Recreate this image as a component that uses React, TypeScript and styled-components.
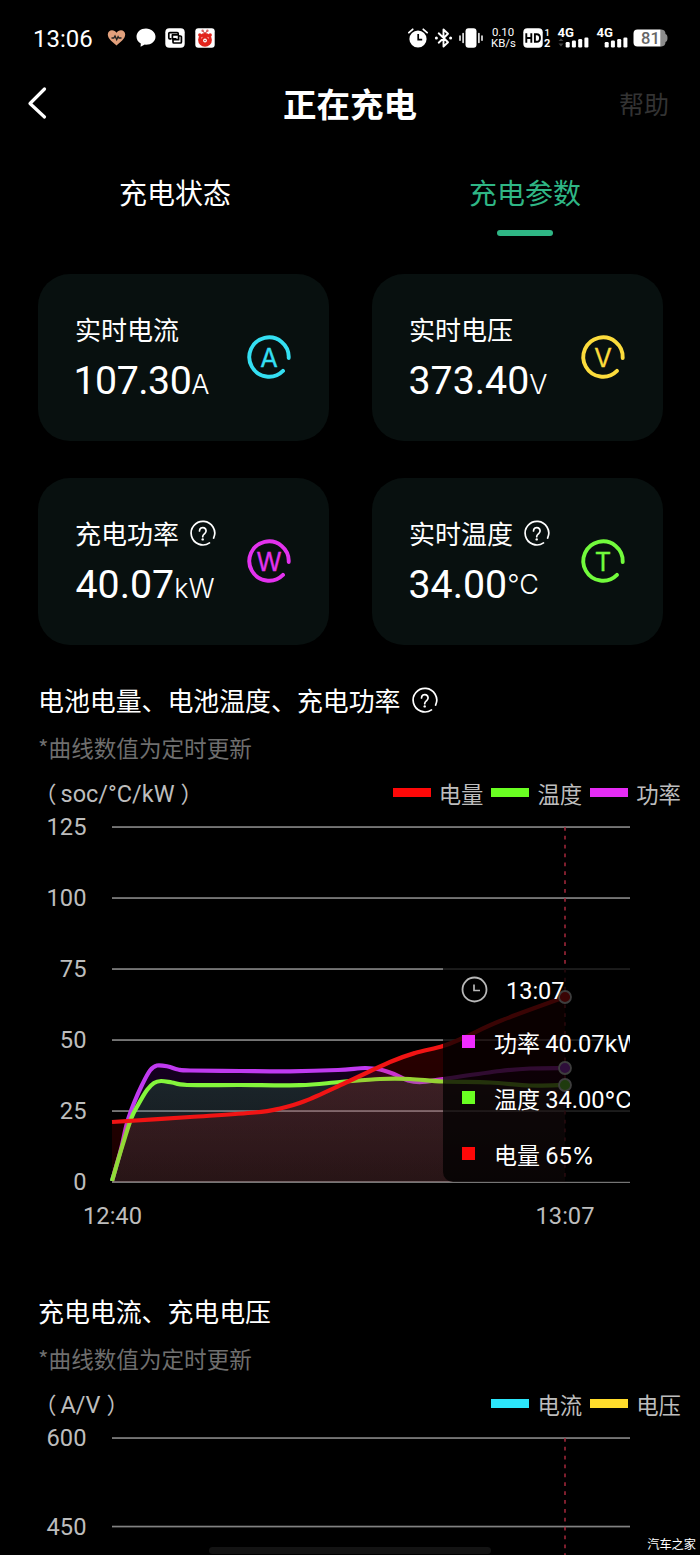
import React from "react";
import styled, { createGlobalStyle } from "styled-components";

const font = `"Noto Sans CJK SC", "Noto Sans", sans-serif`;
const numeric = `Roboto, "Noto Sans CJK SC", sans-serif`;
const latin = `Inter, "Noto Sans CJK SC", sans-serif`;

const GlobalStyle = createGlobalStyle`
  *, *::before, *::after { box-sizing: border-box; }
  html, body { margin: 0; padding: 0; background: #000; }
  body { font-family: ${font}; color: #fff; }
  svg { display: block; flex: none; overflow: visible; }
  svg text { font-family: ${numeric}; }
`;

const Screen = styled.div`
  position: relative;
  width: 700px;
  height: 1555px;
  overflow: hidden;
  background: #000;
  display: flex;
  flex-direction: column;
`;

const Num = styled.span`
  font-family: ${numeric};
  line-height: 1;
`;

const Latin = styled.span`
  font-family: ${latin};
  line-height: 1;
`;

/* ---------- status bar ---------- */

const StatusBar = styled.header`
  height: 75px;
  padding: 0 31px 0 33px;
  display: flex;
  align-items: center;
  justify-content: space-between;
`;

const StatusGroup = styled.div<{ $gap: number }>`
  display: flex;
  align-items: center;
  gap: ${(p) => p.$gap}px;
`;

const Clock = styled.span`
  width: 64.5px;
  padding-top: 2px;
  font-family: ${numeric};
  font-size: 24px;
  line-height: 30px;
`;

const NetSpeed = styled.div`
  width: 24px;
  margin: 0 2px;
  font-family: ${numeric};
  font-size: 11.400px;
  line-height: 11px;
  text-align: center;
  white-space: nowrap;
`;

const NetLine = styled.div`
  height: 11px;
`;

const HeartIcon = () => (
  <svg width="19" height="18" viewBox="0 0 19 18">
    <path d="M9.5 16.5C6 13.6 .8 10 .8 5.6.8 3 2.7 1.2 5 1.2c1.900 0 3.600 1 4.500 2.600C10.400 2.200 12.100 1.200 14 1.200c2.300 0 4.200 1.800 4.200 4.400 0 4.400-5.200 8-8.700 10.900z" fill="#e2a07c" />
    <path d="M4.500 9h2.300l1.200-2 1.700 3.600 1.400-3 .9 1.400h2.500" fill="none" stroke="#222" strokeWidth="1.300" />
  </svg>
);

const BubbleIcon = () => (
  <svg width="20" height="20" viewBox="0 0 20 20">
    <path d="M10 .5C4.700 .5 .5 4 .5 8.700c0 2.900 1.700 5.300 4.300 6.700L4.600 18.700l4.200-2.100 1.200.1c5.300 0 9.500-3.500 9.500-8S15.300 .5 10 .5z" fill="#fff" />
  </svg>
);

const CardsIcon = () => (
  <svg width="20" height="20" viewBox="0 0 20 20">
    <rect x=".3" y=".3" width="19.400" height="19.400" rx="4" fill="#fff" />
    <g fill="none" stroke="#000" strokeWidth="1.700" strokeLinejoin="round">
      <path d="M6.300 10.800H4.800a1 1 0 0 1-1-1V5.600a1 1 0 0 1 1-1h7.400a1 1 0 0 1 1 1v1.200H7.400v4h4" />
      <path d="M13.800 8h1.600a1 1 0 0 1 1 1v5a1 1 0 0 1-1 1H9a1 1 0 0 1-1-1v-2.300h5.600V7" />
    </g>
  </svg>
);

const BearIcon = () => (
  <svg width="20" height="20" viewBox="0 0 20 20">
    <rect x=".3" y=".3" width="19.400" height="19.400" rx="3" fill="#fff" />
    <path d="M10 5.500 7.800 3M10 5.500l2.200-2.500" stroke="#c33" strokeWidth="1.100" />
    <circle cx="7.600" cy="2.700" r="1.200" fill="#d66" />
    <circle cx="12.400" cy="2.700" r="1.200" fill="#d66" />
    <circle cx="10" cy="11.900" r="6.900" fill="#e2241c" />
    <circle cx="4.800" cy="7" r="1.700" fill="#e2241c" />
    <circle cx="15.200" cy="7" r="1.700" fill="#e2241c" />
    <circle cx="10" cy="12.500" r="1.900" fill="#fff" />
    <circle cx="10" cy="12.500" r=".7" fill="#922" />
    <path d="M6 10.200l1.500-.8M14 10.200l-1.500-.8" stroke="#fbb" strokeWidth="1" />
  </svg>
);

const AlarmIcon = () => (
  <svg width="20" height="20" viewBox="0 0 20 20">
    <circle cx="10" cy="11" r="8.600" fill="#fff" />
    <path d="M.9 4.700 4.700 1.300M19.100 4.700l-3.800-3.400" stroke="#fff" strokeWidth="1.800" strokeLinecap="round" />
    <path d="M10.200 6v5.700h4" fill="none" stroke="#000" strokeWidth="1.700" />
  </svg>
);

const BluetoothIcon = () => (
  <svg width="19" height="20" viewBox="-.5 0 19 20">
    <path d="M4.200 5.300 13.500 14.300 9 18.500V1.500l4.500 4.200L4.200 14.700" fill="none" stroke="#fff" strokeWidth="1.900" strokeLinejoin="round" strokeLinecap="round" />
    <circle cx="1.900" cy="10" r="1.500" fill="#fff" />
    <circle cx="16.100" cy="10" r="1.500" fill="#fff" />
  </svg>
);

const VibrateIcon = () => (
  <svg width="24" height="20" viewBox="0 0 24 20">
    <rect x="6.500" y=".3" width="11" height="19.400" rx="3" fill="#fff" />
    <path d="M4.100 5.500v9M1 8v4.300M19.900 5.500v9M23 8v4.300" stroke="#fff" strokeWidth="1.500" strokeLinecap="round" />
  </svg>
);

const HdIcon = () => (
  <svg width="29" height="20" viewBox="0 0 29 20">
    <rect x=".3" y=".3" width="19.400" height="19.400" rx="4" fill="#fff" />
    <path d="M3.300 5.300v9.400M8.300 5.300v9.400M3.300 10h5" stroke="#000" strokeWidth="1.900" fill="none" />
    <path d="M11.900 6.200h1.800q3.300 0 3.300 3.800t-3.300 3.800h-1.800z" stroke="#000" strokeWidth="1.900" fill="none" />
    <text x="21.500" y="8" fontSize="9.500" fontWeight="500" fill="#fff">1</text>
    <text x="21" y="19" fontSize="11" fontWeight="700" fill="#fff">2</text>
  </svg>
);

const SignalIcon = ({ arrows, width }: { arrows?: boolean; width: number }) => (
  <svg width={width} height="22" viewBox={`0 0 ${width} 22`}>
    <text x="-.5" y="9.800" fontSize="12.500" fontWeight="700" fill="#fff" textLength="16.500" lengthAdjust="spacingAndGlyphs">4G</text>
    {arrows && <path d="M.5 14 3 11.500 5.500 14zM.5 16.500h5L3 19.500z" fill="#444" />}
    {[[8.200, 5.500], [14.400, 7], [20.700, 8.500], [26.900, 10]].map(([x, h]) => (
      <rect key={x} x={x - 0.5} y={20.500 - h} width="4" height={h} rx="1.200" fill="#fff" />
    ))}
  </svg>
);

const BatteryIcon = () => (
  <svg width="36" height="18" viewBox="0 0 36 18">
    <path d="M27 .5h1.500a4.500 4.500 0 0 1 4 4.500q2 .5 2 4t-2 4a4.500 4.500 0 0 1-4 4.500H27z" fill="#8c8c8c" />
    <path d="M4.500 .5H27.300v17H4.500a4 4 0 0 1-4-4v-9a4 4 0 0 1 4-4z" fill="#fff" />
    <text x="8" y="15" fontSize="16.500" fontWeight="500" fill="#666">81</text>
  </svg>
);

/* ---------- navigation ---------- */

const NavBar = styled.nav`
  height: 56px;
  padding: 0 31px;
  display: grid;
  grid-template-columns: 1fr auto 1fr;
  align-items: center;
`;

const BackIcon = styled.svg`
  margin-left: -6px;
`;

const NavTitle = styled.h1`
  margin: 0;
  font-size: 33.500px;
  line-height: 40px;
  font-weight: 700;
`;

const HelpLink = styled.span`
  justify-self: end;
  font-size: 25px;
  line-height: 32px;
  color: #333;
`;

const TabBar = styled.div`
  margin-top: 44px;
  height: 61px;
  display: grid;
  grid-template-columns: 1fr 1fr;
`;

const Tab = styled.div<{ $active?: boolean }>`
  display: flex;
  flex-direction: column;
  align-items: center;
  font-size: 28px;
  line-height: 34px;
  color: ${(p) => (p.$active ? "#2fb685" : "#fff")};
  &::after {
    content: "";
    width: 56px;
    height: 6px;
    margin: 21px 1px 0 0;
    border-radius: 3px;
    background: ${(p) => (p.$active ? "#2fb685" : "transparent")};
  }
`;

/* ---------- metric cards ---------- */

const CardGrid = styled.section`
  margin: 38px 37.5px 0;
  display: grid;
  grid-template-columns: 291px 291px;
  grid-auto-rows: 167px;
  gap: 37px 43px;
`;

const Card = styled.article`
  border-radius: 32px;
  background: #08100f;
  padding: 0 38px 0 37.5px;
  display: flex;
  align-items: center;
  justify-content: space-between;
`;

const CardText = styled.div`
  display: flex;
  flex-direction: column;
  gap: 8px;
  white-space: nowrap;
`;

const CardLabel = styled.div`
  display: flex;
  align-items: center;
  gap: 10px;
  font-size: 26px;
  line-height: 34px;
`;

const CardValue = styled.div<{ $shift: number; $tight?: boolean }>`
  margin-left: ${(p) => p.$shift}px;
  height: 50px;
  font-family: ${numeric};
  font-size: 39.300px;
  line-height: 54px;
  letter-spacing: ${(p) => (p.$tight ? "-0.5px" : "normal")};
`;

const CardUnit = styled.span<{ $raise?: number }>`
  position: relative;
  top: ${(p) => -(p.$raise ?? 0)}px;
  font-family: ${latin};
  font-size: 27px;
  font-weight: 350;
  line-height: 1;
`;

const HelpIcon = () => (
  <svg width="28" height="28" viewBox="0 0 28 28">
    <g transform="translate(0 1)">
      <path d="M24.600 18.100A11.800 11.800 0 1 0 20.500 22.900" fill="none" stroke="#fff" strokeWidth="1.700" strokeLinecap="round" />
      <path d="M10.500 10.900a3.300 3.300 0 1 1 5.400 2.500c-1.300 1.100-2.200 1.500-2.200 3.300" fill="none" stroke="#fff" strokeWidth="1.700" strokeLinecap="round" />
      <circle cx="13.700" cy="19.400" r="1.200" fill="#fff" />
    </g>
  </svg>
);

const BadgeSvg = styled.svg`
  margin-top: -1px;
  text {
    font-family: ${latin};
  }
`;

const MetricBadge = ({ letter, color }: { letter: string; color: string }) => (
  <BadgeSvg width="44" height="44" viewBox="0 0 44 44">
    <path d="M41.700 23A19.700 19.700 0 1 0 36 35.900" fill="none" stroke={color} strokeWidth="3.900" strokeLinecap="round" />
    <text x="22" y="31.500" fontSize="25.500" fontWeight="400" fill={color} stroke={color} strokeWidth=".3" textAnchor="middle">{letter}</text>
  </BadgeSvg>
);

const metrics = [
  { label: "实时电流", value: "107.30", unit: "A", letter: "A", color: "#34dff2", shift: -1.5, tight: true },
  { label: "实时电压", value: "373.40", unit: "V", letter: "V", color: "#fcdc3c", shift: -0.5 },
  { label: "充电功率", value: "40.07", unit: "kW", letter: "W", color: "#e332ee", shift: 0.5, help: true },
  { label: "实时温度", value: "34.00", unit: "°C", letter: "T", color: "#72fb3c", shift: -0.5, raise: 4, help: true },
];

/* ---------- charts ---------- */

const ChartSection = styled.section<{ $top: number }>`
  margin-top: ${(p) => p.$top}px;
  display: flex;
  flex-direction: column;
`;

const ChartTitle = styled.h2`
  margin: 0 38px;
  height: 36px;
  display: flex;
  align-items: center;
  gap: 11px;
  font-size: 25.900px;
  line-height: 36px;
  font-weight: 400;
`;

const ChartNote = styled.p`
  margin: 15px 38px 0;
  font-size: 22.600px;
  line-height: 30px;
  color: #6e6e6e;
`;

const LegendRow = styled.div`
  margin: 15px 19px 0 38px;
  height: 30px;
  display: flex;
  align-items: center;
  justify-content: space-between;
  font-size: 22.500px;
  line-height: 30px;
  color: #bdbdbd;
`;

const AxisUnit = styled.span`
  display: flex;
  align-items: center;
  height: 30px;
  margin-left: -4px;
  white-space: nowrap;
`;

const AxisUnitText = styled(Num)`
  margin: 2px 6px 0 4px;
  font-size: 23.500px;
  line-height: 30px;
`;

const Legend = styled.div`
  display: flex;
  gap: 8px;
`;

const LegendItem = styled.span<{ $color: string }>`
  display: flex;
  align-items: center;
  gap: 8px;
  font-size: 22.400px;
  &::before {
    content: "";
    width: 38px;
    height: 9px;
    margin-top: -1px;
    background: ${(p) => p.$color};
  }
`;

const Plot = styled.div`
  position: relative;
  width: 700px;
  margin-top: 1px;
`;

const TooltipClip = styled.div`
  position: absolute;
  left: 443px;
  top: 159px;
  width: 187px;
  height: 214px;
  overflow: hidden;
`;

const Tooltip = styled.div`
  width: 215px;
  height: 214px;
  padding: 4px 0 0 18px;
  border-radius: 0 0 10px 10px;
  background: rgba(0, 0, 0, 0.76);
  display: flex;
  flex-direction: column;
  white-space: nowrap;
`;

const TooltipTime = styled.div`
  height: 34px;
  display: flex;
  align-items: center;
  gap: 18px;
  font-family: ${numeric};
  font-size: 23.500px;
  line-height: 34px;
`;

const TimeText = styled.span`
  padding-top: 4px;
`;

const TooltipRow = styled.div<{ $color: string }>`
  height: 56px;
  padding-top: 15px;
  display: flex;
  align-items: center;
  gap: 19px;
  font-size: 23px;
  line-height: 40px;
  &::before {
    content: "";
    width: 13px;
    height: 13px;
    margin: -1px 0 0 1px;
    background: ${(p) => p.$color};
  }
`;

const TooltipText = styled.span`
  height: 40px;
`;

const TooltipValue = styled(Num)`
  font-size: 23.700px;
`;

const HomeIndicator = styled.div`
  position: absolute;
  left: 209px;
  bottom: 1px;
  width: 282px;
  height: 7px;
  border-radius: 4px;
  background: #131313;
`;

const Watermark = styled.div`
  position: absolute;
  right: 4px;
  bottom: 2px;
  font-size: 12.200px;
  line-height: 18px;
`;

type Pt = [number, number];

/* Smooth curve through the samples (Catmull-Rom converted to cubic segments). */
const curve = (pts: Pt[]) => {
  let d = `M${pts[0][0]} ${pts[0][1]}`;
  for (let i = 0; i < pts.length - 1; i++) {
    const a = pts[Math.max(i - 1, 0)];
    const b = pts[i];
    const c = pts[i + 1];
    const e = pts[Math.min(i + 2, pts.length - 1)];
    d += `C${b[0] + (c[0] - a[0]) / 6} ${b[1] + (c[1] - a[1]) / 6} ${c[0] - (e[0] - b[0]) / 6} ${c[1] - (e[1] - b[1]) / 6} ${c[0]} ${c[1]}`;
  }
  return d;
};

const BASE = 373;

const power: Pt[] = [[112, 372], [121, 340], [127, 314], [134, 294], [142, 276], [150, 261.500], [157, 256.500], [168, 257.500], [178, 260.500], [190, 261.500], [240, 262], [290, 262.300], [338, 261], [365, 259], [380, 260.500], [394, 265], [408, 271.500], [422, 273], [443, 270], [500, 262], [530, 259.500], [565, 259]];
const temperature: Pt[] = [[112, 372], [122, 338], [131, 310], [138, 296], [147, 281], [154, 274], [161, 272], [172, 273.500], [187, 276], [240, 276], [300, 276.200], [340, 273], [380, 270], [410, 270], [443, 272.500], [490, 273.500], [530, 276.500], [565, 276]];
const soc: Pt[] = [[112, 313], [190, 308], [255, 303.500], [280, 299.500], [305, 292], [345, 274], [390, 253], [415, 244], [443, 237], [463, 229], [500, 212], [565, 188]];

const series = [
  { id: "power", pts: power, line: "#c03af0", fill: "#a000f0", top: 0.13, bottom: 0.06 },
  { id: "temperature", pts: temperature, line: "#84f53c", fill: "#3cb95f", top: 0.2, bottom: 0.12 },
  { id: "soc", pts: soc, line: "#f11414", fill: "#ff0000", top: 0.18, bottom: 0.1 },
];

const GridLine = ({ y, label }: { y: number; label: string }) => (
  <g>
    <rect x="112" y={y - 0.800} width="518" height="1.700" fill="#828282" />
    <text x="86.500" y={y + 8} fontSize="23.700" fill="#bdbdbd" textAnchor="end">{label}</text>
  </g>
);

const Cursor = ({ y1, y2 }: { y1: number; y2: number }) => (
  <path d={`M565 ${y1}V${y2}`} stroke="#a8283c" strokeWidth="1.500" strokeDasharray="3.700 5.170" />
);

const BatteryPlot = () => (
  <svg width="700" height="430" viewBox="0 0 700 430">
    <defs>
      {series.map((s) => (
        <linearGradient key={s.id} id={s.id} x1="0" y1="0" x2="0" y2="1">
          <stop offset="0" stopColor={s.fill} stopOpacity={s.top} />
          <stop offset="1" stopColor={s.fill} stopOpacity={s.bottom} />
        </linearGradient>
      ))}
    </defs>
    {["125", "100", "75", "50", "25", "0"].map((label, i) => (
      <GridLine key={label} y={18 + i * 71} label={label} />
    ))}
    <Cursor y1={18} y2={BASE} />
    {series.map((s) => (
      <g key={s.id}>
        <path d={`${curve(s.pts)}V${BASE}H112Z`} fill={`url(#${s.id})`} />
        <path d={curve(s.pts)} fill="none" stroke={s.line} strokeWidth="4.200" />
      </g>
    ))}
    {series.map((s) => (
      <circle key={s.id} cx="565" cy={s.pts[s.pts.length - 1][1]} r="6" fill={s.line} stroke="#fff" strokeWidth="1.800" />
    ))}
    <text x="112.500" y="415" fontSize="23.700" fill="#bdbdbd" textAnchor="middle">12:40</text>
    <text x="565" y="415" fontSize="23.700" fill="#bdbdbd" textAnchor="middle">13:07</text>
  </svg>
);

const ClockIcon = () => (
  <svg width="27" height="27" viewBox="0 0 27 27">
    <circle cx="13.500" cy="13.500" r="12" fill="none" stroke="#b8b8b8" strokeWidth="1.800" />
    <path d="M13 8.500v6h6" fill="none" stroke="#b8b8b8" strokeWidth="1.700" />
  </svg>
);

export default function App() {
  return (
    <Screen>
      <GlobalStyle />
      <StatusBar>
        <StatusGroup $gap={9.5}>
          <Clock>13:06</Clock>
          <HeartIcon />
          <BubbleIcon />
          <CardsIcon />
          <BearIcon />
        </StatusGroup>
        <StatusGroup $gap={6}>
          <AlarmIcon />
          <BluetoothIcon />
          <VibrateIcon />
          <NetSpeed>
            <NetLine>0.10</NetLine>
            <NetLine>KB/s</NetLine>
          </NetSpeed>
          <HdIcon />
          <SignalIcon arrows width={33} />
          <SignalIcon width={30} />
          <BatteryIcon />
        </StatusGroup>
      </StatusBar>

      <NavBar>
        <BackIcon width="24" height="32" viewBox="0 0 24 32">
          <path d="M19.500 2 5 16.500 19.500 30" fill="none" stroke="#fff" strokeWidth="3.200" strokeLinecap="round" strokeLinejoin="round" />
        </BackIcon>
        <NavTitle>正在充电</NavTitle>
        <HelpLink>帮助</HelpLink>
      </NavBar>

      <TabBar>
        <Tab>充电状态</Tab>
        <Tab $active>充电参数</Tab>
      </TabBar>

      <CardGrid>
        {metrics.map((m) => (
          <Card key={m.label}>
            <CardText>
              <CardLabel>
                {m.label}
                {m.help && <HelpIcon />}
              </CardLabel>
              <CardValue $shift={m.shift} $tight={m.tight}>
                {m.value}
                <CardUnit $raise={m.raise}>{m.unit}</CardUnit>
              </CardValue>
            </CardText>
            <MetricBadge letter={m.letter} color={m.color} />
          </Card>
        ))}
      </CardGrid>

      <ChartSection $top={37}>
        <ChartTitle>
          电池电量、电池温度、充电功率
          <HelpIcon />
        </ChartTitle>
        <ChartNote>*曲线数值为定时更新</ChartNote>
        <LegendRow>
          <AxisUnit>
            （<AxisUnitText>soc/°C/kW</AxisUnitText>）
          </AxisUnit>
          <Legend>
            <LegendItem $color="#ff0808">电量</LegendItem>
            <LegendItem $color="#6aff22">温度</LegendItem>
            <LegendItem $color="#e62cf5">功率</LegendItem>
          </Legend>
        </LegendRow>
        <Plot>
          <BatteryPlot />
          <TooltipClip>
            <Tooltip>
              <TooltipTime>
                <ClockIcon />
                <TimeText>13:07</TimeText>
              </TooltipTime>
              <TooltipRow $color="#f02cff">
                <TooltipText>
                  功率 <TooltipValue>40.07</TooltipValue>
                  <Latin>kW</Latin>
                </TooltipText>
              </TooltipRow>
              <TooltipRow $color="#6aff22">
                <TooltipText>
                  温度 <TooltipValue>34.00</TooltipValue>
                  <Latin>°C</Latin>
                </TooltipText>
              </TooltipRow>
              <TooltipRow $color="#ff0808">
                <TooltipText>
                  电量 <TooltipValue>65</TooltipValue>
                  <Latin>%</Latin>
                </TooltipText>
              </TooltipRow>
            </Tooltip>
          </TooltipClip>
        </Plot>
      </ChartSection>

      <ChartSection $top={54}>
        <ChartTitle>充电电流、充电电压</ChartTitle>
        <ChartNote>*曲线数值为定时更新</ChartNote>
        <LegendRow>
          <AxisUnit>
            （<AxisUnitText>A/V</AxisUnitText>）
          </AxisUnit>
          <Legend>
            <LegendItem $color="#2ce6fb">电流</LegendItem>
            <LegendItem $color="#ffdc2c">电压</LegendItem>
          </Legend>
        </LegendRow>
        <Plot>
          <svg width="700" height="135" viewBox="0 0 700 135">
            <GridLine y={18} label="600" />
            <GridLine y={106.500} label="450" />
            <Cursor y1={18} y2={135} />
          </svg>
        </Plot>
      </ChartSection>

      <HomeIndicator />
      <Watermark>汽车之家</Watermark>
    </Screen>
  );
}
